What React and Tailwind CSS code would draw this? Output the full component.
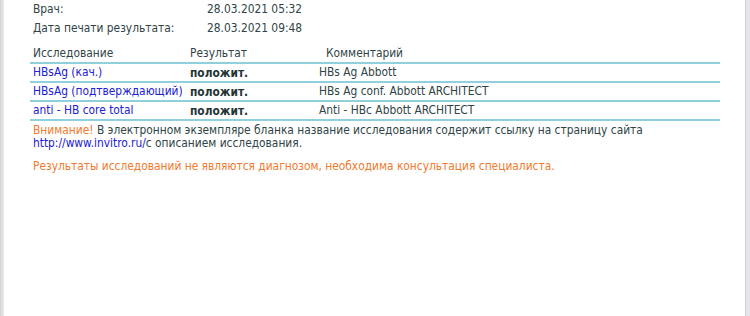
import React from 'react';

const rows = [
  { name: 'HBsAg (кач.)', result: 'положит.', comment: 'HBs Ag Abbott' },
  { name: 'HBsAg (подтверждающий)', result: 'положит.', comment: 'HBs Ag conf. Abbott ARCHITECT' },
  { name: 'anti - HB core total', result: 'положит.', comment: 'Anti - HBc Abbott ARCHITECT' },
];

const App = () => {
  return (
    <div className="flex h-[316px] w-full bg-white text-[11.85px] text-[#2f4446]" style={{ fontFamily: '"DejaVu Sans Condensed", "DejaVu Sans", sans-serif' }}>
      <div className="w-[4px] bg-gradient-to-r from-[#d4d4d8] to-[#ebebee]" />

      <main className="flex-1 pl-[26px]">
        <div className="grid grid-cols-[174px_auto] pl-[3px] leading-[19px]">
          <span>Врач:</span>
          <span>28.03.2021 05:32</span>
          <span>Дата печати результата:</span>
          <span>28.03.2021 09:48</span>
        </div>

        <table className="mt-[6px] w-[690px] table-fixed border-collapse leading-[15px]">
          <colgroup>
            <col className="w-[157px]" />
            <col className="w-[130px]" />
            <col />
          </colgroup>
          <thead>
            <tr className="h-[19px] border-b-2 border-[#8fd0dc]">
              <th className="p-0 pl-[3px] text-left font-normal">Исследование</th>
              <th className="p-0 pl-[3px] text-left font-normal">Результат</th>
              <th className="p-0 pl-[9px] text-left font-normal">Комментарий</th>
            </tr>
          </thead>
          <tbody>
            {rows.map((r) => (
              <tr key={r.name} className="h-[19px] border-b-2 border-[#8fd0dc]">
                <td className="p-0 pl-[3px] whitespace-nowrap text-[#2020d8]">{r.name}</td>
                <td className="p-0 pl-[3px] pt-[1px] font-bold text-[#253536]">{r.result}</td>
                <td className="p-0 pl-[2px]">{r.comment}</td>
              </tr>
            ))}
          </tbody>
        </table>

        <p className="mt-[3px] pl-[3px] leading-[13px]">
          <span className="text-[#f07a2e]">Внимание!</span> В электронном экземпляре бланка название исследования содержит ссылку на страницу сайта
          <br />
          <span className="text-[#2020d8]">http://www.invitro.ru/</span>с описанием исследования.
        </p>

        <p className="mt-[10px] pl-[3px] leading-[13px] text-[#f07a2e]">
          Результаты исследований не являются диагнозом, необходима консультация специалиста.
        </p>
      </main>

      <div className="w-[5px] border-l border-[#cfcfd4] bg-[#e6e6ea]" />
    </div>
  );
};

export default App;
